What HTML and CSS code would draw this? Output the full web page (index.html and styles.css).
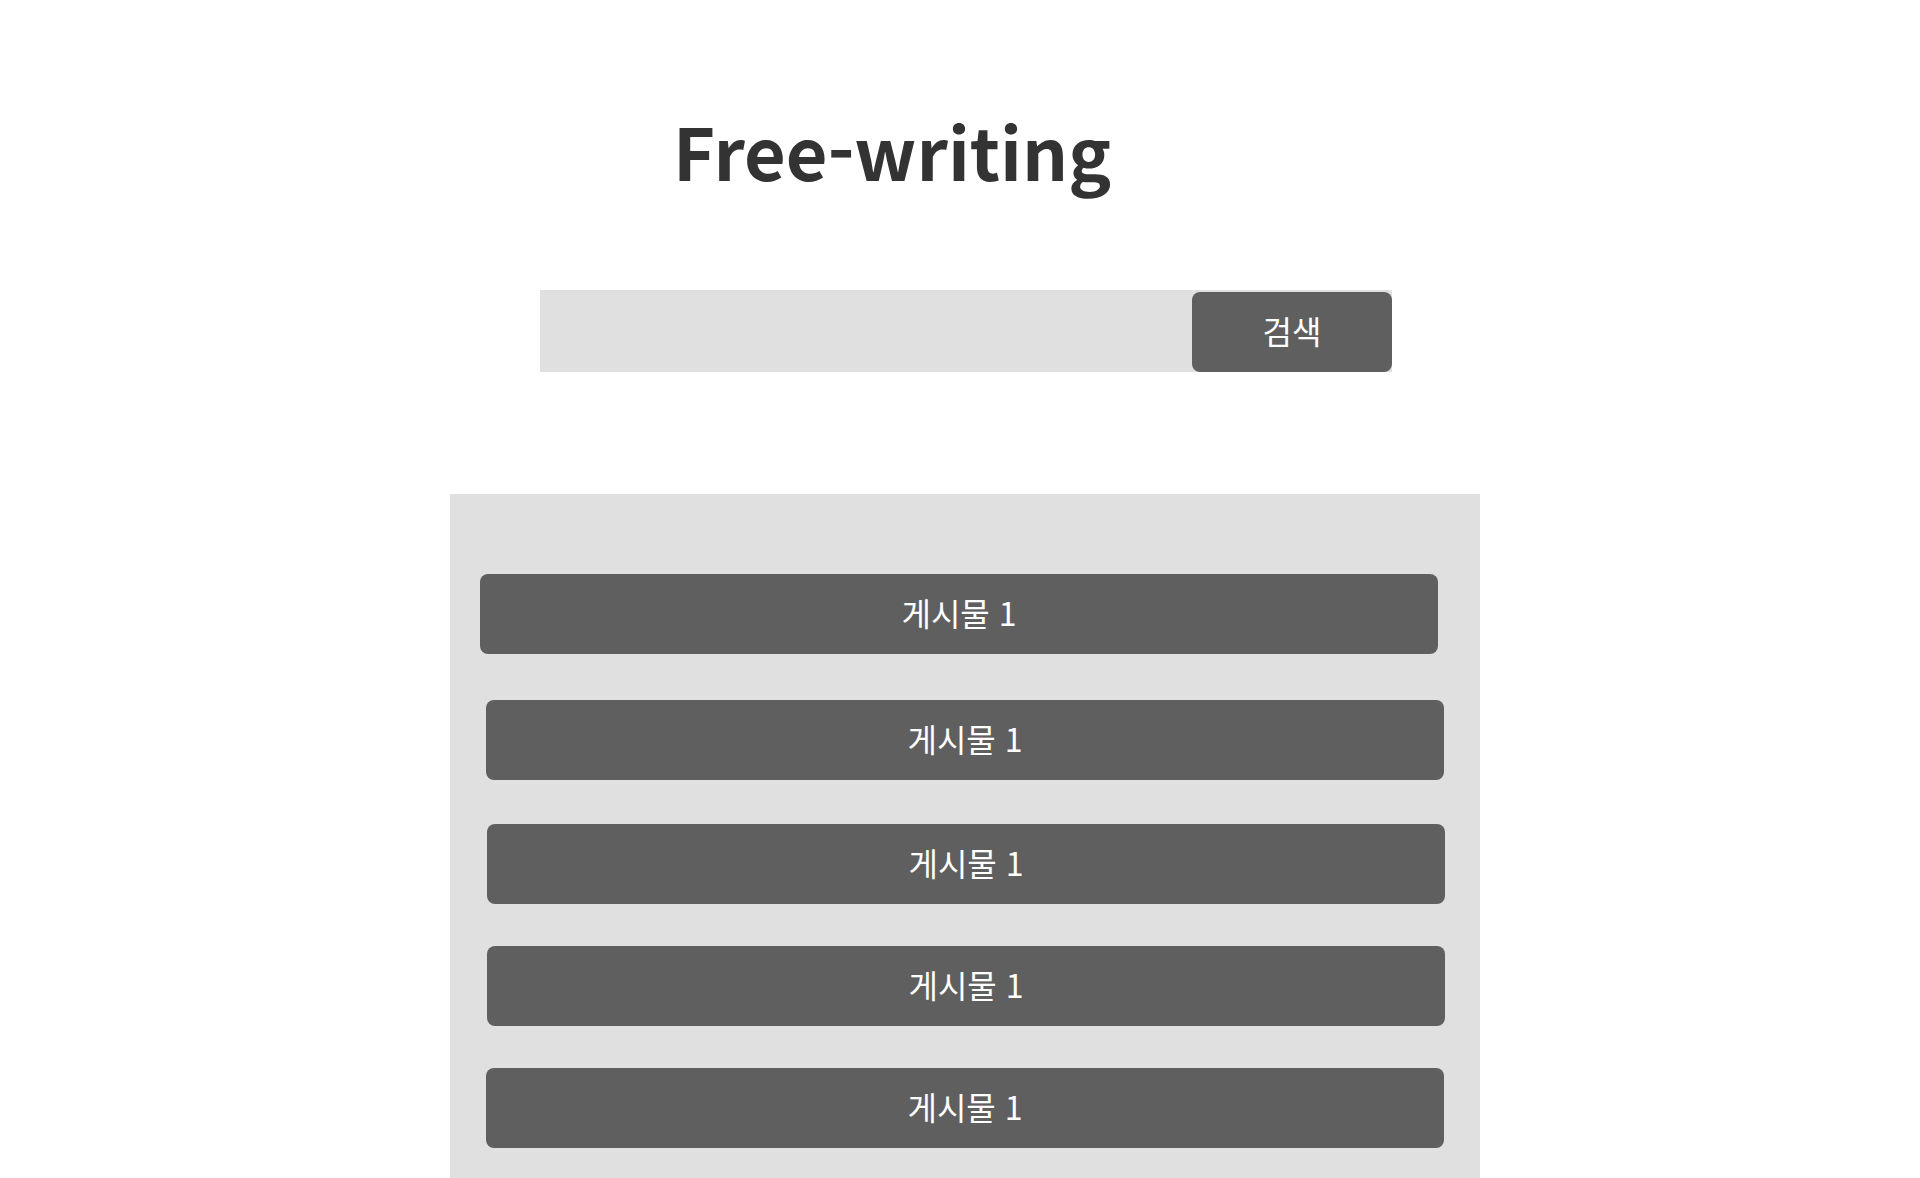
FILE: index.html
```html
<!DOCTYPE html>
<html lang="ko">
<head>
<meta charset="utf-8">
<title>Free-writing</title>
<link rel="stylesheet" href="styles.css">
</head>
<body>
<header class="head">
  <h1 class="title">Free-writing</h1>
</header>
<form class="search">
  <input class="search-input" type="text" aria-label="검색어">
  <button class="search-btn" type="button">검색</button>
</form>
<section class="board">
  <div class="post post-1">게시물 1</div>
  <div class="post post-2">게시물 1</div>
  <div class="post post-3">게시물 1</div>
  <div class="post post-4">게시물 1</div>
  <div class="post post-5">게시물 1</div>
</section>
</body>
</html>
```
FILE: styles.css
```css
html, body {
  margin: 0;
  padding: 0;
  background: #ffffff;
}
body {
  font-family: "Noto Sans CJK KR", "Noto Sans", sans-serif;
  color: #333333;
}
.head {
  padding-top: 105px;
  padding-left: 673px;
  height: 290px;
  box-sizing: border-box;
}
.title {
  margin: 0;
  font-size: 72px;
  line-height: 90px;
  font-weight: 700;
  color: #333333;
}
.search {
  margin: 0 0 0 540px;
  width: 852px;
  height: 82px;
  display: flex;
  align-items: flex-end;
  background: #e0e0e0;
}
.search-input {
  flex: 1;
  height: 100%;
  border: none;
  outline: none;
  background: transparent;
  padding: 0 20px;
  font-family: inherit;
  font-size: 28px;
}
.search-btn {
  width: 200px;
  height: 80px;
  border: none;
  border-radius: 8px;
  background: #5f5f5f;
  color: #ffffff;
  font-family: inherit;
  font-size: 32px;
  padding: 0 0 4px;
}
.board {
  margin: 122px 0 0 450px;
  width: 1030px;
  padding: 80px 0 100px;
  background: #e0e0e0;
  display: flex;
  flex-direction: column;
}
.post {
  box-sizing: border-box;
  width: 958px;
  height: 80px;
  margin-left: 30px;
  padding-bottom: 4px;
  border-radius: 8px;
  background: #5f5f5f;
  color: #ffffff;
  font-size: 32px;
  display: flex;
  align-items: center;
  justify-content: center;
}
.post-2 { margin-left: 36px; margin-top: 46px; }
.post-3 { margin-left: 37px; margin-top: 44px; }
.post-4 { margin-left: 37px; margin-top: 42px; }
.post-5 { margin-left: 36px; margin-top: 42px; }
```
